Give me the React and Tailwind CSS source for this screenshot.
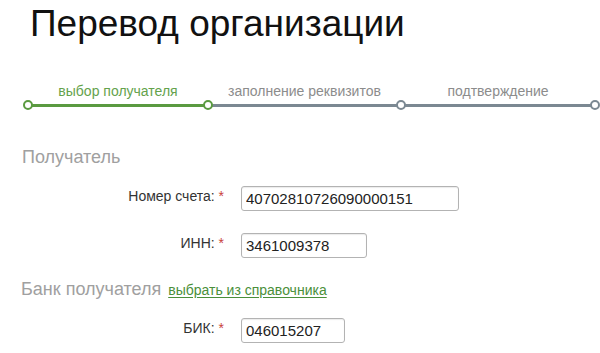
import React from 'react';

const steps = [
  { label: 'выбор получателя', width: 'w-[180px]', done: true },
  { label: 'заполнение реквизитов', width: 'w-[193px]', done: false },
  { label: 'подтверждение', width: 'flex-1', done: false },
];

function Stepper() {
  return (
    <div className="mt-[41px] ml-[28px] mr-[5px] flex">
      {steps.map((s, i) => (
        <div key={s.label} className={`${s.width} relative`}>
          <div
            className={`h-[17px] text-center text-[14px] leading-[16px] ${s.done ? 'text-[#64a24c]' : 'text-[#8c8c8c]'}`}
          >
            {s.label}
          </div>
          <div className="relative h-[10px]">
            <div className={`absolute left-0 right-0 top-[3.5px] h-[3px] ${s.done ? 'bg-[#5a9a40]' : 'bg-[#7b8892]'}`} />
            <span
              className={`absolute left-[-5px] top-0 h-[10px] w-[10px] rounded-full border-2 bg-white ${i <= 1 ? 'border-[#5a9a40]' : 'border-[#7b8892]'}`}
            />
            {i === steps.length - 1 && (
              <span className="absolute right-[-5px] top-0 h-[10px] w-[10px] rounded-full border-2 border-[#7b8892] bg-white" />
            )}
          </div>
        </div>
      ))}
    </div>
  );
}

function Field({ label, value, width, className = '' }) {
  return (
    <div className={`flex items-start ${className}`}>
      <div className="w-[224px] pt-[2px] text-right text-[14px] leading-[16px] text-[#333]">
        {label} <span className="text-[#c8413a]">*</span>
      </div>
      <input
        readOnly
        value={value}
        className={`${width} ml-[17px] h-[25px] rounded-[3px] border border-[#b3b3b3] bg-white px-[4px] text-[15px] leading-[23px] text-[#222] shadow-[inset_0_1px_1px_rgba(0,0,0,0.08)] outline-none`}
      />
    </div>
  );
}

export default function App() {
  return (
    <div className="h-[353px] w-[600px] overflow-hidden bg-white font-['Liberation_Sans',Arial,sans-serif]">
      <h1 className="pl-[30px] pt-[6px] text-[37px] leading-[36px] font-normal text-[#111]">
        Перевод организации
      </h1>

      <Stepper />

      <div className="mt-[38px] pl-[22px] text-[18px] leading-none text-[#a0a0a0]">Получатель</div>

      <Field className="mt-[20px]" label="Номер счета:" value="40702810726090000151" width="w-[218px]" />
      <Field className="mt-[22px]" label="ИНН:" value="3461009378" width="w-[126px]" />

      <div className="mt-[22px] flex items-baseline pl-[21px] leading-none">
        <span className="text-[18px] text-[#a0a0a0]">Банк получателя</span>
        <a href="#" className="ml-[7px] text-[14px] text-[#4a8f3a] underline underline-offset-2">
          выбрать из справочника
        </a>
      </div>

      <Field className="mt-[20px]" label="БИК:" value="046015207" width="w-[104px]" />
    </div>
  );
}
